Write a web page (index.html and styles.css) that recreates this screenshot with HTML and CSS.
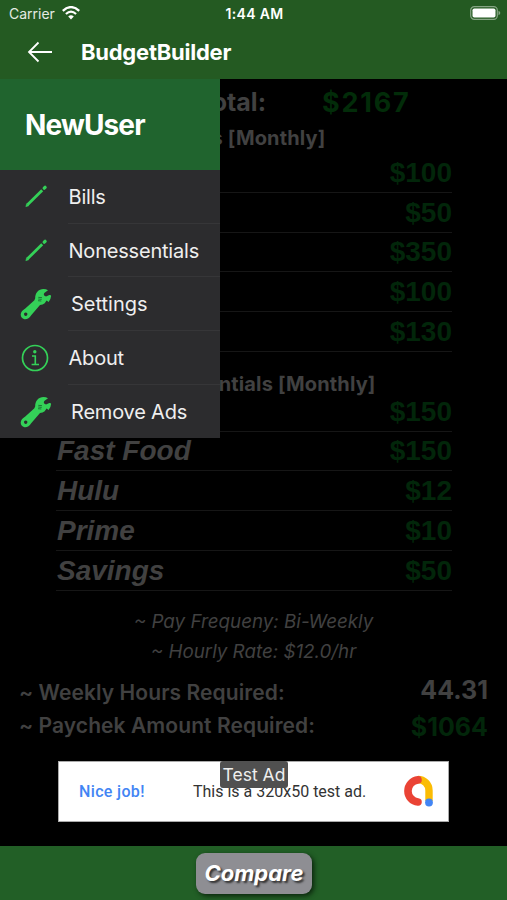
FILE: index.html
```html
<!DOCTYPE html>
<html lang="en">
<head>
<meta charset="utf-8">
<title>BudgetBuilder</title>
<link rel="stylesheet" href="styles.css">
</head>
<body>
<svg class="defs" aria-hidden="true">
  <symbol id="pencil" viewBox="0 0 24 24">
    <path d="M3.500 20.800 18.200 6.200" fill="none" stroke="currentColor" stroke-width="2.800"/>
    <path d="M1.800 22.700 2.600 19.700 4.700 21.800Z" fill="currentColor" stroke="currentColor" stroke-width=".5" stroke-linejoin="round"/>
    <path d="M20.200 4.200 21.100 3.300" fill="none" stroke="currentColor" stroke-width="3.300" stroke-linecap="round"/>
  </symbol>
  <symbol id="wrench" viewBox="0 0 32 32">
    <path fill="currentColor" fill-rule="evenodd" d="M15.2 10.3C15 5.200 18.500 1 23.500 1Q26 1 28 2.300L24.300 5.100Q23.400 6.200 24.100 7.500L26 8.500 29.300 7Q31 6.700 31.100 8 30.900 11.200 28.600 14.100L26.600 12.600 24.700 15.300Q22.800 17 20 17L11.200 27.300Q8.500 31.600 4.500 31.200 0.700 30.400 0.700 26.500 1 23 5 20.800L14.400 12.300ZM5.700 24.500A1.700 1.700 0 1 0 5.710 24.500Z"/>
    <path d="M18.300 9.300 22 9.700M18.200 11 21.700 11.400M18 12.700 21.300 13" fill="none" stroke="#1d7735" stroke-width="1"/>
  </symbol>
</svg>
<div class="app">
  <header class="header">
    <div class="status">
      <div class="carrier"><span>Carrier</span>
        <svg class="wifi" viewBox="0 0 18 14"><path d="M.8 4.900Q9-2.700 17.200 4.900" fill="none" stroke="#fff" stroke-width="2.300"/><path d="M3.900 8Q9 3.400 14.100 8" fill="none" stroke="#fff" stroke-width="2.200"/><path d="M6.200 10.400Q9 8 11.800 10.400L9 13.400Z" fill="#fff"/></svg>
      </div>
      <div class="clock">1:44 AM</div>
      <svg class="battery" viewBox="0 0 31 14"><rect x=".7" y=".7" width="26.600" height="12.600" rx="3.600" fill="none" stroke="#86a584" stroke-width="1.200"/><rect x="2.500" y="2.500" width="23" height="9" rx="1.800" fill="#fff"/><path d="M28.500 4.800Q30.300 5.600 30.300 7T28.500 9.200Z" fill="#86a584"/></svg>
    </div>
    <div class="nav">
      <svg class="back" viewBox="0 0 26 22"><path d="M11.500 1.500 2 11 11.500 20.500M2 11H25" fill="none" stroke="#fff" stroke-width="1.800"/></svg>
      <h1 class="title">BudgetBuilder</h1>
    </div>
  </header>
  <main class="main">
    <div class="total"><span class="total-label">Total:</span><span class="total-value">$2167</span></div>
    <h2 class="section bills">Bills [Monthly]</h2>
    <div class="list">
      <div class="row"><span></span><b>$100</b></div>
      <div class="row"><span></span><b>$50</b></div>
      <div class="row"><span></span><b>$350</b></div>
      <div class="row"><span></span><b>$100</b></div>
      <div class="row"><span></span><b>$130</b></div>
    </div>
    <h2 class="section extras">Nonessentials [Monthly]</h2>
    <div class="list">
      <div class="row"><span></span><b>$150</b></div>
      <div class="row"><span>Fast Food</span><b>$150</b></div>
      <div class="row"><span>Hulu</span><b>$12</b></div>
      <div class="row"><span>Prime</span><b>$10</b></div>
      <div class="row"><span>Savings</span><b>$50</b></div>
    </div>
    <div class="notes">
      <p class="freq">~ Pay Frequeny: Bi-Weekly</p>
      <p class="rate">~ Hourly Rate: $12.0/hr</p>
    </div>
    <div class="result"><span class="hours">~ Weekly Hours Required:</span><b class="hours-value">44.31</b></div>
    <div class="result pay"><span class="amount">~ Paychek Amount Required:</span><b class="amount-value">$1064</b></div>
    <div class="ad">
      <span class="ad-lead">Nice job!</span>
      <span class="ad-text">This is a 320x50 test ad.</span>
      <svg class="admob" viewBox="0 0 32 32"><path d="M16 4.500A11 11 0 0 1 27 15.500V26" fill="none" stroke="#fbbc04" stroke-width="7.400"/><path d="M16 4.900A11.100 11.100 0 0 0 16 27" fill="none" stroke="#ea4335" stroke-width="7.600" stroke-linecap="round"/><circle cx="27" cy="27.500" r="3.900" fill="#4285f4"/></svg>
      <span class="ad-badge">Test Ad</span>
    </div>
    <nav class="drawer">
      <div class="user">NewUser</div>
      <div class="item"><svg class="pen"><use href="#pencil"/></svg><span class="t-bills">Bills</span></div>
      <div class="item"><svg class="pen"><use href="#pencil"/></svg><span class="t-non">Nonessentials</span></div>
      <div class="item"><svg class="tool"><use href="#wrench"/></svg><span class="t-set">Settings</span></div>
      <div class="item"><svg class="info" viewBox="0 0 28 28"><circle cx="14" cy="14" r="12.500" fill="none" stroke="currentColor" stroke-width="1.700"/><circle cx="13.800" cy="7.700" r="1.700" fill="currentColor"/><path d="M11 12H14.300V20.500M10.600 20.500H18" fill="none" stroke="currentColor" stroke-width="1.600"/></svg><span class="t-about">About</span></div>
      <div class="item"><svg class="tool"><use href="#wrench"/></svg><span class="t-ads">Remove Ads</span></div>
    </nav>
  </main>
  <footer class="footer"><button class="compare">Compare</button></footer>
</div>
</body>
</html>
```
FILE: styles.css
```css
* { box-sizing: border-box; }
body { margin: 0; background: #000; font-family: Inter, "Liberation Sans", sans-serif; }
h1, h2, p { margin: 0; }
span, b, p, h1, h2, button { white-space: nowrap; }
.defs { position: absolute; width: 0; height: 0; }
.app { width: 507px; height: 900px; display: flex; flex-direction: column; overflow: hidden; }
.header { height: 79px; background: #245a22; color: #fff; }
.status { height: 27px; padding: 0 7px 0 9px; display: grid; grid-template-columns: 1fr auto 1fr; align-items: center; }
.carrier { display: flex; align-items: center; gap: 7px; font-size: 14px; color: #e4ebe3; }
.wifi { width: 18px; height: 14px; margin-top: -2px; }
.clock { font-size: 14px; font-weight: 600; letter-spacing: .35px; }
.battery { width: 31px; height: 14px; justify-self: end; margin: -1px -1px 0 0; }
.nav { height: 50px; padding-left: 27px; display: flex; align-items: center; }
.back { width: 26px; height: 22px; margin-right: 28px; }
.title { font-size: 22px; line-height: 50px; font-weight: 700; letter-spacing: -.25px; }

.main { position: relative; height: 767px; color: #414141; }
.total { height: 46px; padding-left: 197px; display: flex; align-items: center; font-weight: 700; }
.total-label { width: 125px; font-size: 25px; }
.total-value { font-size: 27px; letter-spacing: 1.800px; color: #022c09; }
.section { text-align: center; font-size: 20px; font-weight: 700; line-height: 27px; height: 28px; letter-spacing: .15px; }
.extras { margin-top: 19px; height: 21px; }
.list { width: 396px; margin: 0 auto 0 56px; font-family: "Liberation Sans", sans-serif; font-weight: 700; }
.row { height: 39.750px; padding-top: 1px; display: flex; justify-content: space-between; align-items: center; border-bottom: 1px solid #161616; font-size: 28px; }
.row span { font-style: italic; padding-left: 1px; }
.row b { color: #02260a; }
.notes { margin-top: 16px; text-align: center; font-size: 18.800px; font-style: italic; }
.notes p { line-height: 30px; }
.notes + .result { margin-top: 9px; height: 33px; }
.result { height: 33px; padding: 0 19px; display: flex; justify-content: space-between; align-items: center; font-size: 21px; font-weight: 600; letter-spacing: .08px; }
.result b { font-size: 25px; font-weight: 700; letter-spacing: 0; }
.result .hours-value { padding-bottom: 5px; }
.result .amount-value { padding-top: 3px; color: #02260a; }
.ad { position: relative; width: 391px; height: 61px; margin: 19px 0 0 58px; background: #fff; border: 1px solid #aaa; display: flex; align-items: center; font-family: Roboto, sans-serif; }
.ad-lead { width: 114px; margin-left: 20px; padding-top: 1px; color: #4285f4; font-size: 16px; font-weight: 500; letter-spacing: .35px; }
.ad-text { padding-top: 1px; color: #333; font-size: 16px; }
.admob { width: 32px; height: 32px; margin: 0 14px 0 auto; }
.ad-badge { position: absolute; left: 161px; top: -1px; width: 68px; height: 27px; text-align: center; border-radius: 3px; background: #505050; color: #eee; font: 17.500px/27px Inter, sans-serif; }

.drawer { position: absolute; left: 0; top: 0; width: 219.500px; height: 359px; background: #2c2c2e; color: #efefef; }
.user { height: 91px; padding-left: 25px; line-height: 93px; background: #20642e; color: #fff; font-size: 28px; font-weight: 700; letter-spacing: -.85px; }
.item { height: 53.700px; padding-left: 20px; display: grid; grid-template-columns: 48px 1fr; align-items: center; font-size: 20px; letter-spacing: -.2px; }
.item span { height: 53.700px; padding-left: .5px; line-height: 55.500px; border-bottom: 1px solid #363638; }
.item:last-child span { border: 0; }
.item svg { color: #34d158; }
.pen { width: 24px; height: 24px; margin: -2px 0 0 3.500px; }
.tool { width: 32px; height: 32px; }
.info { width: 28px; height: 28px; margin-left: 1px; }
.item .t-set, .item .t-ads { padding-left: 3px; }
.item .t-set { letter-spacing: 0; }

.footer { height: 54px; background: #225f26; display: flex; justify-content: center; padding-top: 7px; }
.compare { width: 116px; height: 41px; margin-left: 1px; padding: 0; border: 0; border-radius: 9px; background: #8e8e93; box-shadow: 2px 2px 5px #0b250d; color: #fff; font: italic 700 22px/41px Inter, sans-serif; text-shadow: 2px 2px 2px #333; }
```
